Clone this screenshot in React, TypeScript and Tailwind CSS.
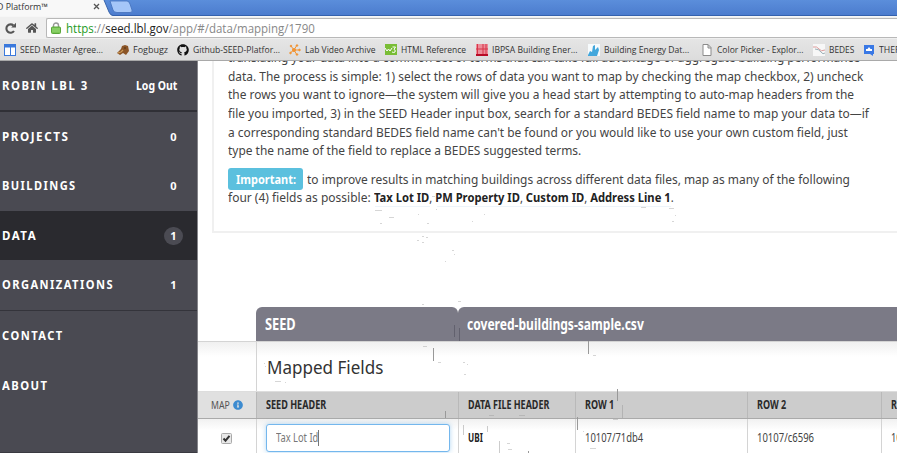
import { useLayoutEffect, useRef, type ReactNode } from "react";
import { FaGithub, FaHome, FaInfoCircle } from "react-icons/fa";

/* One line of text, condensed or widened to a fixed advance width. */
function Fit({ w, className = "", children }: { w: number; className?: string; children: ReactNode }) {
  const ref = useRef<HTMLSpanElement>(null);
  useLayoutEffect(() => {
    const el = ref.current;
    if (el) el.style.transform = `scaleX(${w / el.offsetWidth})`;
  }, [w]);
  return (
    <span className={`block shrink-0 whitespace-nowrap ${className}`} style={{ width: w }}>
      <span ref={ref} className="inline-block origin-left whitespace-nowrap">{children}</span>
    </span>
  );
}

function Bookmark({ icon, label, w, gap }: { icon: ReactNode; label: string; w: number; gap: string }) {
  return (
    <div className={`flex shrink-0 items-center ${gap}`}>
      <span className="mr-[4px] flex h-3 w-3 shrink-0 items-center justify-center">{icon}</span>
      <Fit w={w}>{label}</Fit>
    </div>
  );
}

function Browser() {
  return (
    <header className="h-[61px] shrink-0 border-b border-[#a9a9a9] bg-[#e4e4e4] font-['Open_Sans','Noto_Sans',sans-serif]">
      <div className="flex h-[17px] border-b border-[#f6f6f6] bg-linear-to-b from-[#5b8edb] to-[#4b7bcd]">
        <svg className="h-[16px] w-[140px]" viewBox="0 0 140 16">
          <path d="M0 15.5H140" stroke="#3461ad" />
          <path d="M0 0H104L109 12Q110 15 113 16H0Z" fill="#f8f8f8" />
          <path d="M104 0L109 12Q110 15 113 15.5" fill="none" stroke="#3b66ac" />
          <path d="M110 1H127Q129 1 130 4L132 10Q133 12.500 130 12.500H117Q114 12.500 113 10Z" fill="#a5c6f8" stroke="#4270bb" strokeWidth=".8" />
          <path d="M94 4L99 9M99 4L94 9" stroke="#555" strokeWidth="1.300" />
          <text x="-3" y="10" fontSize="9" textLength="51" lengthAdjust="spacingAndGlyphs" fill="#333">D Platform™</text>
        </svg>
        <div className="h-4 flex-1 border-b border-[#3461ad]" />
      </div>
      <div className="flex h-[22px] items-center bg-[#efefef]">
        <svg className="ml-[4px] h-[13px] w-[13px]" viewBox="0 0 13 13">
          <path d="M10 9A4.200 4.200 0 1 1 9.500 3.500" fill="none" stroke="#555" strokeWidth="2.100" />
          <path d="M7.200 5.500H12V.7Z" fill="#555" />
        </svg>
        <FaHome className="ml-[9px] h-[12px] w-[12px] text-[#555]" />
        <div className="ml-[8px] flex h-[20px] flex-1 items-center rounded-l-[2px] border border-r-0 border-[#b8b8b8] bg-white text-[12px]">
          <svg className="mr-[5px] ml-[4px] h-[12px] w-[10px]" viewBox="0 0 10 12">
            <path d="M2.500 6V3.500a2.500 2.500 0 0 1 5 0V6" fill="none" stroke="#999" strokeWidth="1.400" />
            <rect x=".5" y="5" width="9" height="6.500" rx="1" fill="#79c653" stroke="#5aa63b" />
            <path d="M1 7H9M1 9H9" stroke="#a5df86" strokeWidth=".7" />
          </svg>
          <Fit w={249} className="mt-[2px]">
            <span className="text-[#259b24]">https</span><span className="text-[#888]">://</span><span className="text-[#222]">seed.lbl.gov</span><span className="text-[#888]">/app/#/data/mapping/1790</span>
          </Fit>
        </div>
      </div>
      <div className="flex h-[21px] items-center overflow-hidden bg-linear-to-b from-[#e5e5e5] to-[#dcdcdc] pl-[4px] text-[9px] text-[#333]">
        <Bookmark gap="mr-[14px]" w={83} label="SEED Master Agree..." icon={
          <svg className="h-3 w-3" viewBox="0 0 12 12"><rect x=".5" y=".5" width="11" height="11" fill="#fff" stroke="#3b79dc" /><path d="M0 2H12" stroke="#3b79dc" strokeWidth="3" /><path d="M6.500 3V12" stroke="#3b79dc" /></svg>} />
        <Bookmark gap="mr-[9px]" w={35} label="Fogbugz" icon={
          <svg className="h-3 w-3" viewBox="0 0 12 12"><path d="M0 9L4 5L5 2L8 1L11 2L12 7L9 11L6 9L3 11Z" fill="#8b5527" /><path d="M1 9L4 8L6 6" stroke="#cc9a58" strokeWidth="1.300" fill="none" /><circle cx="8" cy="4" r=".7" fill="#321" /></svg>} />
        <Bookmark gap="mr-[9px]" w={87} label="Github-SEED-Platfor..." icon={<FaGithub className="h-3 w-3 text-[#111]" />} />
        <Bookmark gap="mr-[9px]" w={71} label="Lab Video Archive" icon={
          <svg className="h-3 w-3" viewBox="0 0 12 12" stroke="#f29433" fill="#f29433"><path d="M5 6L2 2M5 6L8 1M5 6L11 6M5 6L8 11M5 6L1 9" /><circle cx="5" cy="6" r="1.500" /><circle cx="2" cy="2" r=".8" /><circle cx="8" cy="1.500" r=".8" /><circle cx="10.500" cy="6" r=".8" /><circle cx="8" cy="10.500" r=".8" /><circle cx="1.500" cy="9" r=".8" /></svg>} />
        <Bookmark gap="mr-[10px]" w={65} label="HTML Reference" icon={
          <svg className="h-3 w-3" viewBox="0 0 12 12"><path d="M0 0H12V11H0Z" fill="#79bd35" /><path d="M0 4L2 7L3.500 5L5 7L7 4M7.500 3H10.500L9 5.500Q11 6 10 8Q9 9 7 8" fill="none" stroke="#fff" /></svg>} />
        <Bookmark gap="mr-[11px]" w={85} label="IBPSA Building Ener..." icon={
          <svg className="h-3 w-3" viewBox="0 0 12 12"><path d="M0 0H12V12H0Z" fill="#ec8c98" /><path d="M1.500 0V10M7 0V10M10 0V10M0 5H12" stroke="#d73549" /><path d="M0 11H12" stroke="#b80b26" strokeWidth="2" /></svg>} />
        <Bookmark gap="mr-[12px]" w={85} label="Building Energy Dat..." icon={
          <svg className="h-3 w-3" viewBox="0 0 12 12"><path d="M0 0H12V12H0Z" fill="#f7fbfd" /><path d="M0 11L2 7L4 8L5 2L7 1L7 6L10 3L11 6L9 12H0Z" fill="#43a7dc" /></svg>} />
        <Bookmark gap="mr-[9px]" w={87} label="Color Picker - Explor..." icon={
          <svg className="h-3 w-3" viewBox="0 0 12 12"><path d="M2 .5H7L10 3.500V11.500H2ZM7 .5V4H10" fill="#fff" stroke="#8b8b8b" /></svg>} />
        <Bookmark gap="mr-[9px]" w={25} label="BEDES" icon={
          <svg className="h-3 w-3" viewBox="0 0 12 12"><path d="M0 0H12V12H0Z" fill="#f7f7f7" /><path d="M0 3Q4 2 6 5T12 6" fill="none" stroke="#dc9b9b" /><path d="M2 5Q6 5 8 8T12 9" fill="none" stroke="#9bb1b8" /></svg>} />
        <Bookmark gap="mr-0" w={29} label="THERM" icon={
          <svg className="h-3 w-3" viewBox="0 0 12 12"><path d="M1 1H11V10H10V12L7 10H1Z" fill="#3978e5" /><path d="M3 7H9V5H7.500L6 3L4.500 5H3Z" fill="#fff" /></svg>} />
      </div>
    </header>
  );
}

function NavItem({ label, w, value, className = "", badge = false }: { label: string; w: number; value?: string; className?: string; badge?: boolean }) {
  return (
    <div className={`flex shrink-0 items-center justify-between pr-[14px] pl-[2px] ${className}`}>
      <Fit w={w} className="tracking-[1.5px]">{label}</Fit>
      {value && <span className={`flex h-[18px] w-[19px] items-center justify-center rounded-full text-[11px] ${badge ? "bg-[#4b4b53]" : ""}`}>{value}</span>}
    </div>
  );
}

function Sidebar() {
  return (
    <nav className="flex w-[198px] shrink-0 flex-col border-r border-[#85858a] bg-[#4a4a52] text-[11.5px] leading-[16px] font-bold text-white">
      <div className="flex h-[51px] shrink-0 items-center justify-between border-b-2 border-[#303036] pr-[20px] pl-[2px]">
        <Fit w={87} className="tracking-[1.5px]">ROBIN LBL 3</Fit>
        <Fit w={41} className="mt-[1px] text-[12px]">Log Out</Fit>
      </div>
      <NavItem label="PROJECTS" w={67} value="0" className="h-[49px]" />
      <NavItem label="BUILDINGS" w={75} value="0" className="h-[50px]" />
      <NavItem label="DATA" w={35} value="1" badge className="h-[49px] bg-[#2a2a2f]" />
      <NavItem label="ORGANIZATIONS" w={112} value="1" className="h-[51px] border-b border-[#34343b]" />
      <NavItem label="CONTACT" w={62} className="h-[50px]" />
      <NavItem label="ABOUT" w={47} className="h-[49px]" />
      <div className="flex-1 border-b border-[#3a3a41]" />
    </nav>
  );
}

const paragraph = [
  { w: 632, text: "translating your data into a common set of terms that can take full advantage of aggregate building performance" },
  { w: 635.5, text: "data. The process is simple: 1) select the rows of data you want to map by checking the map checkbox, 2) uncheck" },
  { w: 626, text: "the rows you want to ignore—the system will give you a head start by attempting to auto-map headers from the" },
  { w: 640.5, text: "file you imported, 3) in the SEED Header input box, search for a standard BEDES field name to map your data to—if" },
  { w: 620, text: "a corresponding standard BEDES field name can't be found or you would like to use your own custom field, just" },
  { w: 353.5, text: "type the name of the field to replace a BEDES suggested terms." },
];

function Instructions() {
  return (
    <section className="ml-[14px] h-[172px] shrink-0 overflow-hidden border-b-2 border-l-2 border-[#f0f0f0] pl-[14px] text-[13px] leading-[18.7px] text-[#444]">
      <div className="-mt-[13px]">
        {paragraph.map((line) => <Fit key={line.w} w={line.w} className="h-[18.7px]">{line.text}</Fit>)}
      </div>
      <div className="mt-[8px] flex h-[22px] items-center">
        <span className="mr-[4px] flex h-[22px] w-[75px] shrink-0 items-center rounded-[3px] bg-[#5bc0de] pl-[8px] font-bold text-white">
          <Fit w={60}>Important:</Fit>
        </span>
        <Fit w={543}>to improve results in matching buildings across different data files, map as many of the following</Fit>
      </div>
      <div className="-mt-[2px] flex">
        <Fit w={143}>four (4) fields as possible:</Fit>
        <Fit w={300} className="ml-[3px]">
          <b className="text-[#222]">Tax Lot ID</b>, <b className="text-[#222]">PM Property ID</b>, <b className="text-[#222]">Custom ID</b>, <b className="text-[#222]">Address Line 1</b>.
        </Fit>
      </div>
    </section>
  );
}

const cell = "flex items-center border-l pl-[9px]";

function MappingTable() {
  return (
    <section className="mt-[74px] flex flex-1 flex-col">
      <div className="flex h-[34px] shrink-0 pl-[58px] text-[16.5px] font-bold text-white">
        <div className="flex w-[202px] shrink-0 items-center rounded-t-[6px] bg-[#7b7a86] pl-[9px]"><Fit w={31}>SEED</Fit></div>
        <div className="flex flex-1 items-center rounded-tl-[6px] bg-[#7b7a86] pl-[8.5px]"><Fit w={177}>covered-buildings-sample.csv</Fit></div>
      </div>
      <div className="flex h-[50px] shrink-0 border-t border-[#d4d4d4] bg-linear-to-b from-[#f0f0f0] via-white via-30% to-white">
        <div className="w-[58px] shrink-0" />
        <div className="flex items-center border-l border-[#d4d4d4] pl-[9.5px] text-[18.5px] text-[#333]"><Fit w={116}>Mapped Fields</Fit></div>
      </div>
      <div className="flex h-[28px] shrink-0 border-t border-b border-t-[#ddd] border-b-[#aaa] bg-[#cccccc] text-[11.5px] font-bold text-[#292929]">
        <div className="flex w-[58px] shrink-0 items-center bg-[#e0e0e0] pl-[13px] font-normal text-[#555]"><Fit w={19}>MAP</Fit><FaInfoCircle className="ml-[3px] h-[10px] w-[10px] text-[#3c8bd0]" /></div>
        <div className={`${cell} w-[202px] shrink-0 border-[#b9b9b9]`}><Fit w={60}>SEED HEADER</Fit></div>
        <div className={`${cell} w-[117px] shrink-0 border-[#b9b9b9]`}><Fit w={81}>DATA FILE HEADER</Fit></div>
        <div className={`${cell} w-[172px] shrink-0 border-[#b9b9b9]`}><Fit w={29}>ROW 1</Fit></div>
        <div className={`${cell} w-[134px] shrink-0 border-[#b9b9b9]`}><Fit w={29}>ROW 2</Fit></div>
        <div className={`${cell} shrink-0 border-[#b9b9b9]`}><Fit w={29}>ROW 3</Fit></div>
      </div>
      <div className="flex h-[38px] shrink-0 bg-linear-to-b from-[#f1f1f1] via-white via-30% to-white text-[12px] text-[#444]">
        <div className="flex w-[58px] shrink-0 items-center pl-[23px]">
          <svg className="h-[11px] w-[11px]" viewBox="0 0 11 11"><rect x=".5" y=".5" width="10" height="10" rx="1" fill="#e8e8e8" stroke="#aaa" /><path d="M2.500 5.500L4.500 7.700L8.500 2.800" fill="none" stroke="#333" strokeWidth="2" /></svg>
        </div>
        <div className="flex w-[202px] shrink-0 items-center border-l border-[#d4d4d4] pl-[9px]">
          <div className="flex h-[28px] w-[184px] items-center rounded-[3px] border border-[#74b7ed] bg-white pl-[9px] text-[#777] shadow-[0_0_5px_rgba(102,175,233,.5)]"><Fit w={42}>Tax Lot Id</Fit><span className="h-[16px] w-px bg-[#777]" /></div>
        </div>
        <div className={`${cell} w-[117px] shrink-0 border-[#d4d4d4] font-bold text-[#222]`}><Fit w={15}>UBI</Fit></div>
        <div className={`${cell} w-[172px] shrink-0 border-[#d4d4d4]`}><Fit w={58}>10107/71db4</Fit></div>
        <div className={`${cell} w-[134px] shrink-0 border-[#d4d4d4]`}><Fit w={57}>10107/c6596</Fit></div>
        <div className={`${cell} shrink-0 border-[#d4d4d4]`}><Fit w={57}>10107/d9735</Fit></div>
      </div>
    </section>
  );
}

/* Stray cursor-trail marks lying over the page. */
function Marks() {
  return (
    <svg className="pointer-events-none absolute inset-0 h-[453px] w-[897px]" viewBox="0 0 897 453" fill="none" stroke="#999">
      <path d="M433.500 348V361M588.500 341V354M617.500 389V401M445.500 411V418M577.500 417V430M528.500 451V453" />
      <path d="M622.500 405V418M463.500 425V435M487.500 426V432M499.500 441V453" strokeOpacity=".5" />
      <path d="M459.500 328V341M454.500 325V337" stroke="#5c5b68" strokeOpacity=".8" />
      <path d="M375 210.500H382M389 217.500H394M380 223.500H382M427 223.500H429M418 214.500H419M436 209.500H437M472 221.500H473M484 214.500H485M422 236.500H424M426 237.500H428M417 240.500H419M422 242.500H424M452 250.500H454M454 254.500H455M445 261.500H446M641 207.500H646M669 208.500H674M672 221.500H674M675 215.500H676M432 196.500H435M422 304.500H424M458 301.500H461M423 346.500H427M438 362.500H441M463 362.500H465M467 364.500H468M464 374.500H466M275 381.500H281M285 382.500H286M264 363.500H265M265 366.500H266M489 415.500H494M519 415.500H525M507 443.500H510M508 449.500H512M590 448.500H596M593 355.500H596M613 419.500H618M583 431.500H584" strokeOpacity=".4" />
      <path d="M375 206.500H430M437 206.500H671" stroke="#edf4fa" />
    </svg>
  );
}

export default function App() {
  return (
    <div className="relative flex h-[453px] w-[897px] flex-col overflow-hidden bg-white font-['Noto_Sans','Open_Sans',sans-serif]">
      <Browser />
      <div className="flex min-h-0 flex-1">
        <Sidebar />
        <main className="flex min-w-0 flex-1 flex-col overflow-hidden">
          <Instructions />
          <MappingTable />
        </main>
      </div>
      <Marks />
    </div>
  );
}
